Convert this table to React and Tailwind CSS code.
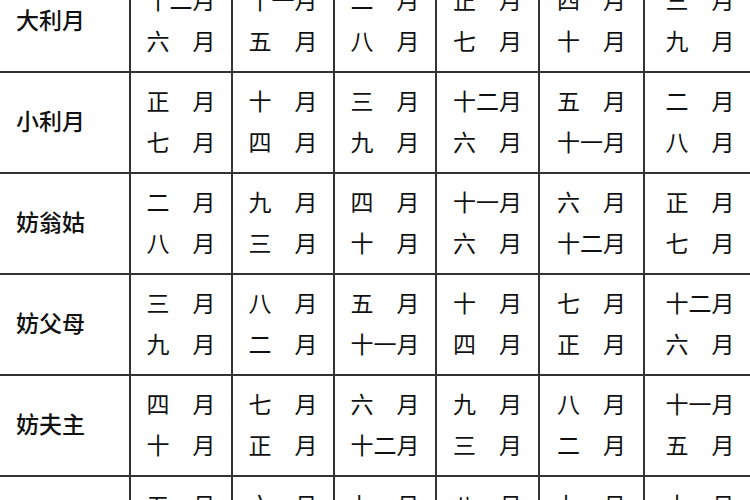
const rows = [
  {
    label: "大利月",
    cells: [
      ["十二月", "六　月"],
      ["十一月", "五　月"],
      ["二　月", "八　月"],
      ["正　月", "七　月"],
      ["四　月", "十　月"],
      ["三　月", "九　月"],
    ],
  },
  {
    label: "小利月",
    cells: [
      ["正　月", "七　月"],
      ["十　月", "四　月"],
      ["三　月", "九　月"],
      ["十二月", "六　月"],
      ["五　月", "十一月"],
      ["二　月", "八　月"],
    ],
  },
  {
    label: "妨翁姑",
    cells: [
      ["二　月", "八　月"],
      ["九　月", "三　月"],
      ["四　月", "十　月"],
      ["十一月", "六　月"],
      ["六　月", "十二月"],
      ["正　月", "七　月"],
    ],
  },
  {
    label: "妨父母",
    cells: [
      ["三　月", "九　月"],
      ["八　月", "二　月"],
      ["五　月", "十一月"],
      ["十　月", "四　月"],
      ["七　月", "正　月"],
      ["十二月", "六　月"],
    ],
  },
  {
    label: "妨夫主",
    cells: [
      ["四　月", "十　月"],
      ["七　月", "正　月"],
      ["六　月", "十二月"],
      ["九　月", "三　月"],
      ["八　月", "二　月"],
      ["十一月", "五　月"],
    ],
  },
  {
    label: "妨女身",
    cells: [
      ["五　月", "十一月"],
      ["六　月", "十二月"],
      ["七　月", "正　月"],
      ["八　月", "二　月"],
      ["九　月", "三　月"],
      ["十　月", "四　月"],
    ],
  },
];

export default function App() {
  return (
    <div
      className="w-[750px] h-[500px] overflow-hidden bg-white text-[#111]"
      style={{ fontFamily: '"Noto Sans CJK SC", "Noto Sans", sans-serif' }}
    >
      <div className="-mt-[28px] grid grid-cols-[129px_100px_100px_100px_101px_103px_110px] auto-rows-[99px] gap-[2px] bg-[#333] w-[757px]">
        {rows.map((row) => (
          <Row key={row.label} row={row} />
        ))}
      </div>
    </div>
  );
}

function Row({ row }) {
  return (
    <>
      <div className="bg-white flex items-center pl-[16px] pb-[4px]">
        <span className="text-[23px] font-medium">{row.label}</span>
      </div>
      {row.cells.map((c, i) => (
        <div key={i} className="bg-white flex flex-col items-center justify-center pb-[4px]">
          {c.map((t, j) => (
            <span key={j} className="text-[23px] leading-[41px] whitespace-pre">
              {t}
            </span>
          ))}
        </div>
      ))}
    </>
  );
}
